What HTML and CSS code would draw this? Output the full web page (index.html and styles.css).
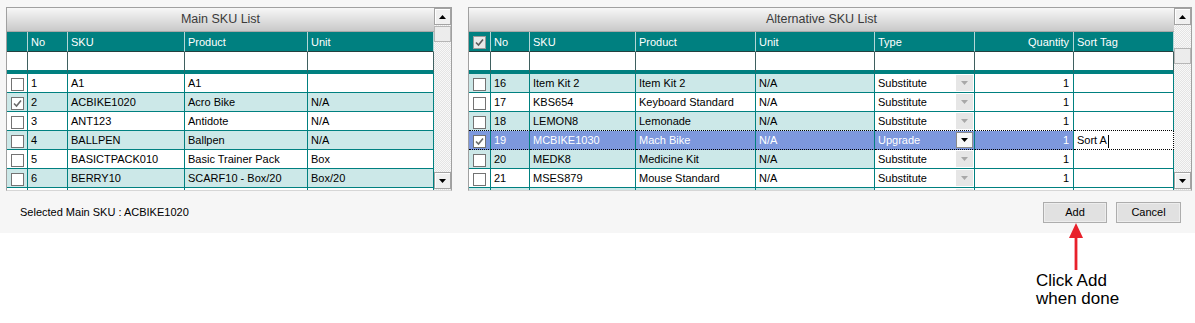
FILE: index.html
```html
<!DOCTYPE HTML>
<html>
<head>
<link rel="stylesheet" href="styles.css">
</head>
<body>
<div class="screen">
<div class="app">
  <div class="panels">

    <div class="panel panel-main">
      <div class="gridbox">
        <div class="title">Main SKU List</div>
        <table class="grid">
          <colgroup>
            <col class="m0"><col class="m1"><col class="m2"><col class="m3"><col>
          </colgroup>
          <tr>
            <th class="chk"></th><th>No</th><th>SKU</th><th>Product</th><th>Unit</th>
          </tr>
          <tr class="filter">
            <td></td><td></td><td></td><td></td><td></td>
          </tr>
          <tr>
            <td class="chk"><span class="cb"></span></td><td>1</td><td>A1</td><td>A1</td><td></td>
          </tr>
          <tr class="alt">
            <td class="chk"><span class="cb on"><svg width="11" height="11" viewBox="0 0 11 11"><path d="M2 5.5 L4.5 8 L9 2.5" fill="none" stroke="#6a6a6a" stroke-width="1.6"/></svg></span></td><td>2</td><td>ACBIKE1020</td><td>Acro Bike</td><td>N/A</td>
          </tr>
          <tr>
            <td class="chk"><span class="cb"></span></td><td>3</td><td>ANT123</td><td>Antidote</td><td>N/A</td>
          </tr>
          <tr class="alt">
            <td class="chk"><span class="cb"></span></td><td>4</td><td>BALLPEN</td><td>Ballpen</td><td>N/A</td>
          </tr>
          <tr>
            <td class="chk"><span class="cb"></span></td><td>5</td><td>BASICTPACK010</td><td>Basic Trainer Pack</td><td>Box</td>
          </tr>
          <tr class="alt">
            <td class="chk"><span class="cb"></span></td><td>6</td><td>BERRY10</td><td>SCARF10 - Box/20</td><td>Box/20</td>
          </tr>
          <tr>
            <td class="chk"><span class="cb"></span></td><td></td><td></td><td></td><td></td>
          </tr>
        </table>
      </div>
      <div class="vscroll">
        <div class="sb-btn"><svg width="7" height="4" viewBox="0 0 7 4"><path d="M0 4 L3.5 0 L7 4 Z" fill="#000"/></svg></div>
        <div class="sb-thumb"></div>
        <div class="sb-btn sb-down"><svg width="7" height="4" viewBox="0 0 7 4"><path d="M0 0 L7 0 L3.5 4 Z" fill="#000"/></svg></div>
      </div>
    </div>

    <div class="panel panel-alt">
      <div class="gridbox">
        <div class="title">Alternative SKU List</div>
        <table class="grid">
          <colgroup>
            <col class="a0"><col class="a1"><col class="a2"><col class="a3"><col class="a4"><col class="a5"><col class="a6"><col>
          </colgroup>
          <tr>
            <th class="chk"><span class="cb head"><svg width="11" height="11" viewBox="0 0 11 11"><path d="M2 5.5 L4.5 8 L9 2.5" fill="none" stroke="#5a5a5a" stroke-width="1.6"/></svg></span></th>
            <th>No</th><th>SKU</th><th>Product</th><th>Unit</th><th>Type</th><th class="num">Quantity</th><th>Sort Tag</th>
          </tr>
          <tr class="filter">
            <td></td><td></td><td></td><td></td><td></td><td></td><td></td><td></td>
          </tr>
          <tr class="alt">
            <td class="chk"><span class="cb"></span></td><td>16</td><td>Item Kit 2</td><td>Item Kit 2</td><td>N/A</td>
            <td class="type"><div class="combo"><span class="ctext">Substitute</span><span class="drop"><svg width="7" height="4" viewBox="0 0 7 4"><path d="M0 0 L7 0 L3.5 4 Z"/></svg></span></div></td>
            <td class="qty">1</td><td class="tag"></td>
          </tr>
          <tr>
            <td class="chk"><span class="cb"></span></td><td>17</td><td>KBS654</td><td>Keyboard Standard</td><td>N/A</td>
            <td class="type"><div class="combo"><span class="ctext">Substitute</span><span class="drop"><svg width="7" height="4" viewBox="0 0 7 4"><path d="M0 0 L7 0 L3.5 4 Z"/></svg></span></div></td>
            <td class="qty">1</td><td class="tag"></td>
          </tr>
          <tr class="alt presel">
            <td class="chk"><span class="cb"></span></td><td>18</td><td>LEMON8</td><td>Lemonade</td><td>N/A</td>
            <td class="type"><div class="combo"><span class="ctext">Substitute</span><span class="drop"><svg width="7" height="4" viewBox="0 0 7 4"><path d="M0 0 L7 0 L3.5 4 Z"/></svg></span></div></td>
            <td class="qty">1</td><td class="tag"></td>
          </tr>
          <tr class="sel">
            <td class="chk"><span class="cb on"><svg width="11" height="11" viewBox="0 0 11 11"><path d="M2 5.5 L4.5 8 L9 2.5" fill="none" stroke="#6a6a6a" stroke-width="1.6"/></svg></span></td><td>19</td><td>MCBIKE1030</td><td>Mach Bike</td><td>N/A</td>
            <td class="type"><div class="combo"><span class="ctext">Upgrade</span><span class="drop"><svg width="7" height="4" viewBox="0 0 7 4"><path d="M0 0 L7 0 L3.5 4 Z"/></svg></span></div></td>
            <td class="qty">1</td><td class="tag">Sort A<span class="caret"></span></td>
          </tr>
          <tr class="alt">
            <td class="chk"><span class="cb"></span></td><td>20</td><td>MEDK8</td><td>Medicine Kit</td><td>N/A</td>
            <td class="type"><div class="combo"><span class="ctext">Substitute</span><span class="drop"><svg width="7" height="4" viewBox="0 0 7 4"><path d="M0 0 L7 0 L3.5 4 Z"/></svg></span></div></td>
            <td class="qty">1</td><td class="tag"></td>
          </tr>
          <tr>
            <td class="chk"><span class="cb"></span></td><td>21</td><td>MSES879</td><td>Mouse Standard</td><td>N/A</td>
            <td class="type"><div class="combo"><span class="ctext">Substitute</span><span class="drop"><svg width="7" height="4" viewBox="0 0 7 4"><path d="M0 0 L7 0 L3.5 4 Z"/></svg></span></div></td>
            <td class="qty">1</td><td class="tag"></td>
          </tr>
          <tr class="alt">
            <td class="chk"><span class="cb"></span></td><td></td><td></td><td></td><td></td>
            <td class="type"><div class="combo"><span class="ctext"></span><span class="drop"><svg width="7" height="4" viewBox="0 0 7 4"><path d="M0 0 L7 0 L3.5 4 Z"/></svg></span></div></td>
            <td class="qty"></td><td class="tag"></td>
          </tr>
        </table>
      </div>
      <div class="vscroll">
        <div class="sb-btn"><svg width="7" height="4" viewBox="0 0 7 4"><path d="M0 4 L3.5 0 L7 4 Z" fill="#000"/></svg></div>
        <div class="sb-thumb"></div>
        <div class="sb-btn sb-down"><svg width="7" height="4" viewBox="0 0 7 4"><path d="M0 0 L7 0 L3.5 4 Z" fill="#000"/></svg></div>
      </div>
    </div>

  </div>
  <div class="footer">
    <div class="selected">Selected Main SKU : ACBIKE1020</div>
    <button type="button" class="btn">Add</button>
    <button type="button" class="btn btn-cancel">Cancel</button>
  </div>
</div>

<svg class="note-arrow" width="16" height="50" viewBox="0 0 16 50">
  <path d="M8 1 L1 16 L15 16 Z" fill="#e8212b"/>
  <rect x="6.6" y="15" width="2.8" height="33" fill="#e8212b"/>
</svg>
<div class="note-text">Click Add<br>when done</div>
</div>
</body>
</html>
```

FILE: styles.css
```css
body {
  margin: 0;
  background: #fff;
  font-family: "Liberation Sans", Arial, sans-serif;
  font-size: 11px;
  color: #000;
}

.screen {
  position: relative;
  width: 1195px;
  height: 323px;
}

.app {
  background: #f6f6f6;
  height: 233px;
  box-sizing: border-box;
  padding: 7px 0 0 6px;
}

.panels {
  display: flex;
  gap: 16px;
}

.panel {
  display: flex;
  height: 182px;
  border: 1px solid #a0a0a0;
  border-bottom-color: #d6d6d6;
  background: #fff;
}

.panel-main { width: 444px; }
.panel-alt { width: 722px; }

.gridbox {
  flex: 1;
  overflow: hidden;
}

.title {
  height: 23px;
  line-height: 23px;
  border-bottom: 1px solid #a8a8a8;
  background: linear-gradient(#f7f7f7, #c9c9c9);
  text-align: center;
  font-size: 12.5px;
  color: #3a3a3a;
}

/* grid */
.grid {
  width: 100%;
  border-collapse: separate;
  border-spacing: 0;
  table-layout: fixed;
}

.m0 { width: 21px; }
.m1 { width: 40px; }
.m2 { width: 117px; }
.m3 { width: 123px; }

.a0 { width: 22px; }
.a1 { width: 39px; }
.a2 { width: 106px; }
.a3 { width: 120px; }
.a4 { width: 119px; }
.a5 { width: 100px; }
.a6 { width: 99px; }

.grid th,
.grid td {
  height: 18px;
  line-height: 18px;
  padding: 0 3px;
  border-right: 1px solid #008080;
  border-bottom: 1px solid #008080;
  white-space: nowrap;
  overflow: hidden;
  text-align: left;
  font-weight: normal;
}

.grid th {
  height: 19px;
  background: #008080;
  color: #fff;
  border-right-color: #b4d6d6;
  border-bottom-color: #24403f;
}

.grid th.num { text-align: right; padding-right: 4px; }

.grid .filter td {
  background: #fff;
  border-right-color: #3f6060;
  border-bottom: 4px solid #008080;
}

.grid td.chk,
.grid th.chk {
  padding: 0;
  text-align: center;
}

.alt td { background: #cce8e8; }

td.type, td.qty, td.tag { background: #fff; }

td.qty { text-align: right; padding-right: 4px; }

td.type { padding: 0; }

.presel td { border-bottom: 1px dotted #000; }

.sel td {
  background: #7d98dd;
  color: #fff;
  border-bottom: 1px dotted #000;
}

.sel td.tag {
  background: #fff;
  color: #000;
  border-right: 1px dotted #000;
}

.caret {
  display: inline-block;
  width: 1px;
  height: 13px;
  background: #000;
  vertical-align: middle;
  margin-left: 1px;
}

/* checkbox */
.cb {
  display: inline-block;
  box-sizing: border-box;
  width: 13px;
  height: 13px;
  border: 1px solid #737373;
  background: #fff;
  vertical-align: middle;
  line-height: 0;
}

.cb svg { display: block; }

.cb.head {
  background: #e9e9e9;
  border-color: #9a9a9a;
}

/* combo box */
.combo {
  display: flex;
  align-items: center;
  height: 18px;
}

.ctext {
  flex: 1;
  padding-left: 3px;
}

.drop {
  box-sizing: border-box;
  width: 17px;
  height: 16px;
  margin-right: 1px;
  background: #e6e6e6;
  display: flex;
  align-items: center;
  justify-content: center;
}

.drop svg { fill: #a8a8a8; }

.sel .drop {
  background: #f7f7f7;
  border: 1px solid #8c8c8c;
}

.sel .drop svg { fill: #000; }

/* scrollbar */
.vscroll {
  width: 17px;
  display: flex;
  flex-direction: column;
  background-color: #f0f0f0;
  background-image: repeating-conic-gradient(#e4e4e4 0 25%, #f8f8f8 0 50%);
  background-size: 2px 2px;
}

.sb-btn {
  box-sizing: border-box;
  width: 17px;
  height: 17px;
  background: #f0f0f0;
  border: 1px solid #a3a3a3;
  box-shadow: inset 1px 1px #fff;
  display: flex;
  align-items: center;
  justify-content: center;
}

.sb-thumb {
  box-sizing: border-box;
  width: 17px;
  height: 16px;
  margin-top: 1px;
  background: #ececec;
  border: 1px solid #b6b6b6;
}

.panel-alt .sb-thumb { margin-top: 23px; }

.sb-down {
  margin-top: auto;
  margin-bottom: 1px;
}

/* footer */
.footer {
  display: flex;
  align-items: center;
  height: 42px;
  padding: 0 14px 0 14px;
}

.selected { flex: 1; }

.btn {
  box-sizing: border-box;
  width: 64px;
  height: 21px;
  margin-left: 9px;
  padding: 0;
  background: #e1e1e1;
  border: 1px solid #adadad;
  box-shadow: inset 0 0 0 1px #ededed;
  font-family: "Liberation Sans", Arial, sans-serif;
  font-size: 11px;
  color: #000;
}

.btn-cancel { width: 65px; }

/* annotation */
.note-arrow {
  position: absolute;
  left: 1068px;
  top: 222px;
}

.note-text {
  position: absolute;
  left: 1036px;
  top: 272px;
  font-size: 17px;
  line-height: 18px;
}
```
